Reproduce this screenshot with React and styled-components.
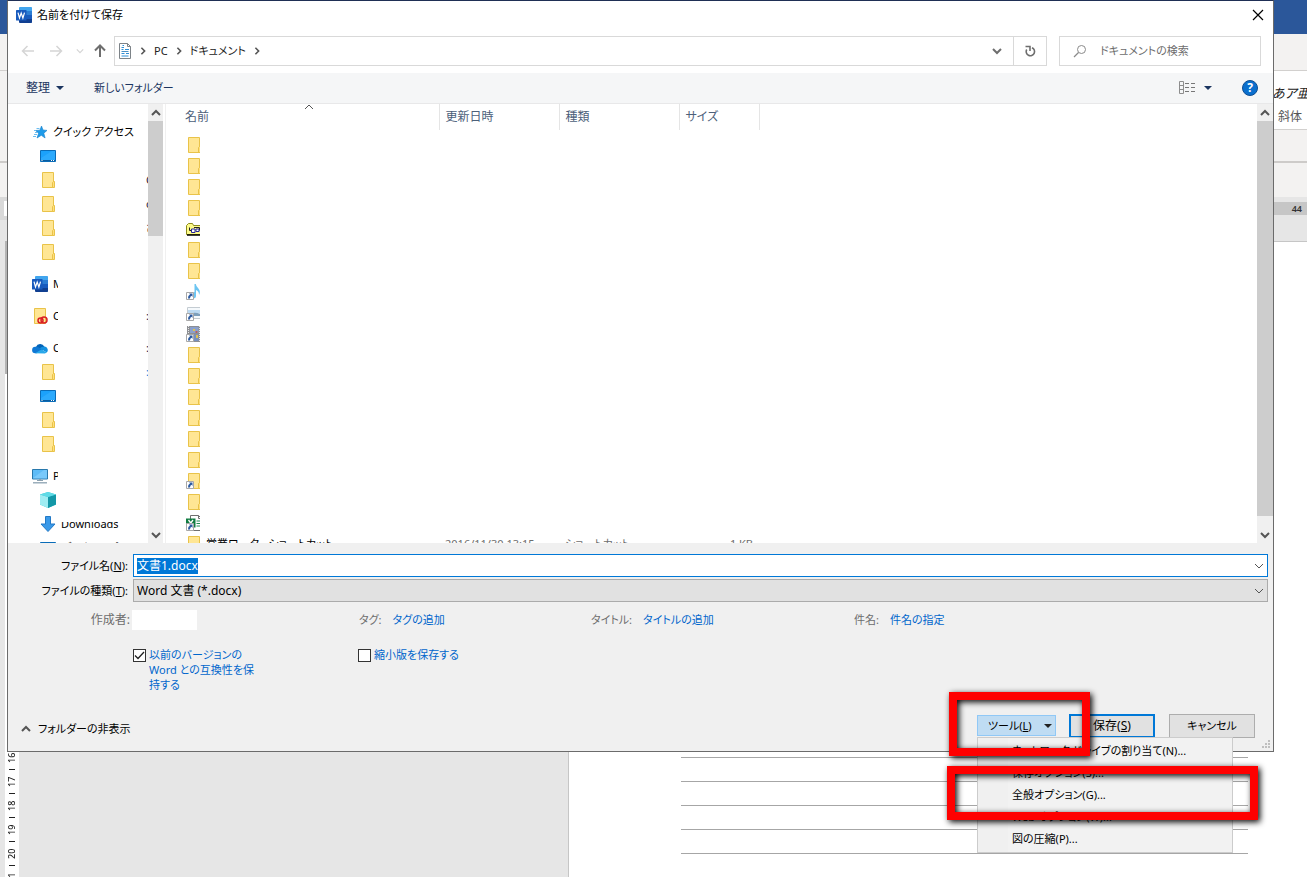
import React from 'react'
import styled, { createGlobalStyle, css } from 'styled-components'

const GlobalStyle = createGlobalStyle`
  * {
    box-sizing: border-box;
  }
  html, body, #root {
    height: 100%;
  }
  body {
    margin: 0;
    overflow: hidden;
    background: #fff;
    color: #000;
    font-family: "Noto Sans", "Noto Sans CJK JP", sans-serif;
    font-size: 12px;
    line-height: 16px;
    font-feature-settings: "palt";
  }
  button, input, select {
    font: inherit;
    font-feature-settings: inherit;
    color: inherit;
  }
`

/* ---------- icons ---------- */

const WordIcon = () => (
  <svg width="16" height="16" viewBox="0 0 16 16">
    <path d="M4 0h11.3q.7 0 .7.7V4H3V1q0-1 1-1z" fill="#41a5ee" />
    <path d="M3 4h13v4H3z" fill="#2b7cd3" />
    <path d="M3 8h13v4H3z" fill="#185abd" />
    <path d="M3 12h13v3.200q0 .8-.7.8H4q-1 0-1-1z" fill="#103f91" />
    <rect y="3" width="10.500" height="10.500" rx=".6" fill="#185abd" />
    <path d="M2 5.600 3.500 11 5.200 6 6.900 11 8.500 5.600" fill="none" stroke="#fff" strokeWidth="1.200" />
  </svg>
)

const FolderIcon = ({ shortcut, cloud }) => (
  <svg width="16" height="16" viewBox="0 0 16 16">
    <path d="M2.500.5h11v15h-11z" fill="#ffe694" stroke="#e9c349" />
    {!cloud && <path d="M12.500 15.500v-5l1-1h1v6z" fill="#ffdf7e" stroke="#e9c349" />}
    {shortcut && <Shortcut />}
    {cloud && (
      <g fill="none" stroke="#da1f26" strokeWidth="1.500">
        <circle cx="8.500" cy="12.500" r="2.500" />
        <circle cx="12" cy="12" r="3" />
      </g>
    )}
  </svg>
)

const Shortcut = () => (
  <g>
    <path d="M.5 8.500h7v7h-7z" fill="#fff" stroke="#a8a8a8" />
    <path d="M2 14.500q-.3-3 2-4L3 9.500h3.500V13l-1-1.200q-1.500.7-1.500 2.700z" fill="#2c5aa0" />
  </g>
)

const DesktopIcon = () => (
  <svg width="16" height="16" viewBox="0 0 16 16">
    <path d="M.5 2.500h15v11H.5z" fill="#1ba1fb" stroke="#0a6cb8" />
    <path d="M1 10 12 3h3v9H1z" fill="#3db3ff" opacity=".5" />
    <path d="M1 12.500h14" stroke="#0b5c9e" />
    <path d="M1.500 12.500h1M11 12.500h1M13 12.500h1" stroke="#fff" />
  </svg>
)

const StarIcon = () => (
  <svg width="16" height="16" viewBox="0 0 16 16">
    <path d="m9.500 2 1.500 4 4 .4-3.200 2.800 1.300 4.800-3.800-2.700L5 14l1.600-4.800L3.500 6.500l4.400-.3z" fill="#1d9bea" stroke="#1680ca" strokeWidth=".6" />
    <path d="M4.500 4.500h3M2 6.500h2M3 8.500h2M2 10.500h3M1 12.500h3" stroke="#6cbcf0" />
  </svg>
)

const CloudIcon = () => (
  <svg width="16" height="16" viewBox="0 0 16 16">
    <path d="M4 7a4.500 4.500 0 0 1 8.300-.5L13 9l-5 3-6-2z" fill="#0364b8" />
    <path d="M3.500 6.800q1.800-.4 3.300.6l4 2.400L5 13.300H3.200a3.200 3.200 0 0 1 .3-6.500z" fill="#0f78d4" />
    <path d="M12.300 6.600a3.500 3.500 0 0 1 2.400 6l-4.500-2.800-2.500-1.500q1.800-1.700 4.600-1.700z" fill="#1490df" />
    <path d="M3 13.300 9.500 9.400l5.300 3.200q-.8.800-2 .8z" fill="#28a8ea" />
  </svg>
)

const PcIcon = () => (
  <svg width="16" height="16" viewBox="0 0 16 16">
    <path d="M.5 1.500h15v9.500H.5z" fill="#5ebcf7" stroke="#2878ac" />
    <path d="M1 10 12 2h3v8.500H1z" fill="#92d6ff" opacity=".5" />
    <path d="M7 11.500h2M5 12.500h6" stroke="#8ba1b0" />
    <path d="M1 14.800h14" stroke="#8ba1b0" strokeWidth="1.300" />
  </svg>
)

const CubeIcon = () => (
  <svg width="16" height="16" viewBox="0 0 16 16">
    <path d="M8 0l8 2.500v10L8 16l-8-3.500v-10z" fill="#35c3d2" />
    <path d="M0 2.500 8 5v11l-8-3.500z" fill="#9fecf2" />
    <path d="M8 5l8-2.500v10L8 16z" fill="#1397a7" />
    <path d="M0 2.500 8 0l8 2.500L8 5z" fill="#5fdbe6" />
  </svg>
)

const DownloadIcon = () => (
  <svg width="16" height="16" viewBox="0 0 16 16">
    <path d="M5.500.5h5v7.500h4.500L8 15.500 1 8h4.500z" fill="#3a99e8" stroke="#2379c6" />
  </svg>
)

const BlocksFolderIcon = () => (
  <svg width="16" height="16" viewBox="0 0 16 16">
    <path d="M.5 13.500V4.500l2-2h4l1 2h7.500v9z" fill="#fdfb8a" stroke="#8d8a1c" />
    <path d="M1 14h15" stroke="#000" strokeWidth="1.500" />
    <path d="M3.500 6.500v3h3M8 6.500h5.500v3" fill="none" stroke="#222" />
    <path d="M5.500 8h3.500v3.500H5.500zM10 8h3v2.500h-3z" fill="#fff" stroke="#26269a" />
  </svg>
)

const MusicIcon = () => (
  <svg width="16" height="16" viewBox="0 0 16 16">
    <path d="M8.500 0h1.300q.3 2.500 2.600 4.500 2.600 3 .6 6.500.2-3.500-3-5v6q0 2.500-3.500 2.500V9l2-1z" fill="#6cc5f2" />
    <Shortcut />
  </svg>
)

const PictureIcon = () => (
  <svg width="16" height="16" viewBox="0 0 16 16">
    <path d="M1.500 2.500h14v11h-14z" fill="#f5f9fc" stroke="#c4ccd2" />
    <path d="M2 5h13v3H2z" fill="#bcdaf2" />
    <path d="M2 9.500q6-3 13-.5v2H2z" fill="#7d9fbb" />
    <Shortcut />
  </svg>
)

const FilmIcon = () => (
  <svg width="16" height="16" viewBox="0 0 16 16">
    <path d="M1 0h15v16H1z" fill="#8d8f93" />
    <path d="M4 1h8.500v6H4z" fill="#8aa0cc" />
    <path d="M4 8.500h8.500V15H4z" fill="#7690c0" />
    <path d="M2.500 0v16M13.500 0v16" stroke="#e8e8e8" strokeDasharray="1 1" />
    <path d="M7 3h2v2H7zM10 9h2v3h-2z" fill="#dfc04f" />
    <path d="M9.500 5h2v2h-2z" fill="#b96060" />
    <Shortcut />
  </svg>
)

const ExcelIcon = () => (
  <svg width="16" height="16" viewBox="0 0 16 16">
    <path d="M4.500.5h8l3 3v12h-11z" fill="#fff" stroke="#6f6f6f" />
    <path d="M12.500.5v3h3" fill="none" stroke="#6f6f6f" />
    <path d="M10.500 6h4M10.500 8.500h4M10.500 11h4" stroke="#1e8a52" />
    <path d="M0 3.500h9.500v9H0z" fill="#107c41" />
    <path d="m2.500 5 4.500 6M7 5l-4.500 6" stroke="#fff" strokeWidth="1.300" />
    <Shortcut />
  </svg>
)

const DocIcon = () => (
  <svg width="14" height="16" viewBox="0 0 14 16">
    <path d="M1.500.5h8l3 3v12h-11z" fill="#fff" stroke="#7d8388" />
    <path d="M9.500.5v3h3" fill="none" stroke="#7d8388" />
    <path d="M6 2.500H4.500M6 4.500H3.500M7 6.500h4M3.500 6.500h2M3.500 10.500h3M8 10.500h3M3.500 13h7" stroke="#2f8fd6" />
    <path d="M3.500 8.500h7" stroke="#4a90c4" />
  </svg>
)

const Arrow = ({ dir, color }) => {
  const turn = { left: 0, up: 90, right: 180 }[dir]
  return (
    <svg width="14" height="14" viewBox="0 0 14 14">
      <path d="M6.500 2 1.500 7l5 5M2 7h11" fill="none" stroke={color} strokeWidth={dir === 'up' ? 2 : 1.500} transform={`rotate(${turn} 7 7)`} />
    </svg>
  )
}

const Chevron = ({ dir = 'down', color = '#555', size = 10, weight = 1.500 }) => {
  const turn = { down: 0, left: 90, up: 180, right: 270 }[dir]
  return (
    <svg width={size} height={size} viewBox="0 0 10 10">
      <path d="M1 3l4 4 4-4" fill="none" stroke={color} strokeWidth={weight} transform={`rotate(${turn} 5 5)`} />
    </svg>
  )
}

const Triangle = ({ color = '#1b3560' }) => (
  <svg width="8" height="4" viewBox="0 0 8 4">
    <path d="M0 0h8L4 4z" fill={color} />
  </svg>
)

/* ---------- word window behind the dialog ---------- */

const WordWindow = styled.div`
  height: 100%;
  display: flex;
  flex-direction: column;
  overflow: hidden;
  background: #f3f2f1;
`
const WordTitle = styled.div`
  flex: none;
  height: 34px;
  background: #2b579a;
`
const WordTabs = styled.div`
  flex: none;
  height: 37px;
  border-bottom: 1px solid #d2d0ce;
`
const Ribbon = styled.div`
  flex: none;
  height: 92px;
  border-bottom: 2px solid #cdcbc9;
`
const StyleGallery = styled.div`
  height: 59px;
  margin-left: 40px;
  padding: 14px 5px 0 0;
  background: #fff;
  border-bottom: 1px solid #d2d0ce;
  display: flex;
  flex-direction: column;
  align-items: flex-end;
  gap: 8px;
  color: #555;
`
const StyleSample = styled.em`
  color: #222;
  width: 30px;
  font-size: 13px;
  white-space: nowrap;
`
const RulerBar = styled.div`
  flex: none;
  height: 44px;
  margin-top: 34px;
  display: flex;
  align-items: flex-start;
  background: #e6e6e6;
`
const TabSelector = styled.div`
  width: 40px;
  height: 23px;
  padding: 4px;
  background: #d9d9d9;

  &::before {
    content: "";
    display: block;
    height: 15px;
    background: #fff;
  }
`
const RulerScale = styled.div`
  flex: 1;
  height: 13px;
  margin-top: 5px;
  padding-right: 5px;
  background: #c6c6c6;
  color: #333;
  font-size: 9px;
  font-weight: 600;
  line-height: 13px;
  text-align: right;
`
const DocArea = styled.div`
  flex: 1;
  min-height: 0;
  display: flex;
  padding-left: 5px;
  background: #e6e6e6;
`
const VerticalRuler = styled.ol`
  width: 14px;
  margin: 0;
  padding: 11px 0;
  list-style: none;
  background: #fff;
  border-top: 133px solid #b4b4b4;
`
const RulerMark = styled.li`
  height: 24px;
  display: flex;
  flex-direction: column;
  align-items: center;
  color: #222;
  font-size: 9px;
  font-weight: 500;
  line-height: 14px;

  &::before {
    content: "";
    width: 6px;
    height: 1px;
    background: #222;
  }
  span {
    flex: 1;
    text-align: center;
    writing-mode: vertical-rl;
    transform: rotate(180deg);
  }
`
const Paper = styled.div`
  flex: 1;
  margin-left: calc(43% - 11px);
  padding: 12px 59px 0 112px;
  background: #fff;
  border: 1px solid #c6c6c6;
  border-width: 1px 0 0 1px;
`
const PaperLine = styled.div`
  height: 24px;
  border-bottom: 1px solid #a6a6a6;
`

/* ---------- dialog ---------- */

const Dialog = styled.section`
  position: absolute;
  top: 0;
  left: 7px;
  right: 33px;
  background: #fff;
  border: 1px solid #6b6b6b;
  border-top-color: #1f2f55;
  font-size: 11px;
`
const TitleBar = styled.header`
  height: 30px;
  padding: 0 9px 2px 8px;
  display: flex;
  align-items: center;
  gap: 5px;

  h1 {
    flex: 1;
    margin: 0;
    font-size: 11px;
    font-weight: 400;
  }
`
const IconButton = styled.button`
  display: flex;
  align-items: center;
  justify-content: center;
  width: ${({ $w }) => $w || 16}px;
  height: ${({ $h }) => $h || 16}px;
  padding: 0;
  border: 0;
  background: none;
`
const NavBar = styled.nav`
  height: 42px;
  padding: 5px 12px 7px;
  display: flex;
  align-items: center;
  gap: 12px;
`
const Arrows = styled.div`
  display: flex;
  align-items: center;
  gap: 8px;
  margin-right: -6px;
`
const AddressBar = styled.div`
  flex: 1;
  height: 30px;
  padding-left: 3px;
  border: 1px solid #d9d9d9;
  display: flex;
  align-items: center;
  gap: 7px;
  color: #222;
`
const AddressEnd = styled.div`
  margin-left: auto;
  height: 100%;
  display: flex;

  ${IconButton} + ${IconButton} {
    border-left: 1px solid #d9d9d9;
  }
`
const Search = styled.label`
  width: 202px;
  height: 30px;
  padding: 0 13px;
  border: 1px solid #d9d9d9;
  display: flex;
  align-items: center;
  gap: 13px;

  input {
    flex: 1;
    min-width: 0;
    padding: 0;
    border: 0;
    outline: 0;
  }
  input::placeholder {
    color: #6d6d6d;
  }
`
const Toolbar = styled.div`
  height: 31px;
  padding: 0 15px 0 18px;
  display: flex;
  align-items: center;
  gap: 30px;
  background: #f5f6f7;
  border-bottom: 1px solid #e8e8e9;
  color: #1b3560;
`
const ToolbarButton = styled.button`
  padding: 0;
  border: 0;
  background: none;
  display: flex;
  align-items: center;
  gap: 6px;
  margin-left: ${({ $end }) => ($end ? 'auto' : 0)};
  font-size: ${({ $large }) => ($large ? 12 : 11)}px;
`
const Help = styled.button`
  width: 16px;
  height: 16px;
  padding: 0;
  border: 1px solid #0d4d92;
  border-radius: 8px;
  background: #0a6fce;
  color: #fff;
  font-size: 12px;
  font-weight: 700;
  line-height: 14px;
`
const Panes = styled.div`
  height: 439px;
  display: flex;
`
const Tree = styled.ul`
  flex: none;
  width: 140px;
  margin: 0;
  padding: 16px 0 0;
  list-style: none;
  overflow: hidden;
`
const TreeRow = styled.li`
  height: 24px;
  margin-top: ${({ $group }) => ($group ? 8 : 0)}px;
  padding-left: ${({ $deep }) => ($deep ? 32 : 24)}px;
  display: flex;
  align-items: center;
  gap: 5px;
  white-space: nowrap;
`
const TreeLabel = styled.span`
  ${({ $cut }) => $cut && css`
    width: 5px;
    overflow: hidden;
  `}
  ${({ $low }) => $low && css`
    clip-path: inset(6px 0 0);
  `}
`
const TreeTail = styled.span`
  width: 2px;
  margin-left: auto;
  overflow: hidden;
  color: ${({ $link }) => ($link ? '#0078d7' : '#1a1a40')};
`
const Track = styled.div`
  flex: none;
  width: ${({ $w }) => $w}px;
  background: #f0f0f0;
  display: flex;
  flex-direction: column;
  align-items: center;
`
const Thumb = styled.div`
  width: 100%;
  height: ${({ $h }) => $h};
  margin-bottom: auto;
  background: #cdcdcd;
`
const FilePane = styled.div`
  flex: 1;
  min-width: 0;
  margin-left: 2px;
  border-left: 1px solid #f0f0f0;
  overflow: hidden;
`
const FileTable = styled.table`
  width: 100%;
  table-layout: fixed;
  border-collapse: collapse;

  th {
    height: 26px;
    padding: 0 6px;
    border-right: 1px solid #e5e5e5;
    color: #4c607a;
    font-size: 12px;
    font-weight: 400;
    text-align: left;
  }
  th:first-child {
    padding-left: 19px;
  }
  th:last-child {
    border: 0;
  }
  td {
    height: 21px;
    padding: 0 6px;
    color: #6d6d6d;
    white-space: nowrap;
  }
  tbody::before {
    content: "";
    display: block;
    height: 4px;
  }
`
const Heading = styled.div`
  height: 26px;
  display: grid;
  align-items: center;

  span, svg {
    grid-area: 1 / 1;
  }
  svg {
    place-self: start center;
    margin-top: -2px;
  }
`
const FileName = styled.div`
  height: 21px;
  padding-left: 14px;
  display: flex;
  align-items: center;
  gap: 6px;
  color: #000;
`
const FileIcon = styled.span`
  flex: none;
  width: 14px;
  height: 16px;
  overflow: hidden;
`
const RightCell = styled.td`
  text-align: right;
`
const Bottom = styled.div`
  padding: 11px 5px 0 8px;
  background: #f0f0f0;
`
const Field = styled.div`
  display: flex;
  align-items: center;
  margin-bottom: 2px;

  > label {
    width: 117px;
    padding-right: 5px;
    text-align: right;
    white-space: nowrap;
  }
`
const NameBox = styled.div`
  flex: 1;
  height: 23px;
  padding: 0 3px;
  display: flex;
  align-items: center;
  background: #fff;
  border: 1px solid #0078d7;
  font-size: 12px;

  input {
    height: 16px;
    padding: 0;
    border: 0;
    outline: 0;
    background: #0078d7;
    color: #fff;
    field-sizing: content;
  }
  button {
    margin-left: auto;
  }
`
const TypeBox = styled.div`
  flex: 1;
  height: 23px;
  padding: 0 3px;
  display: grid;
  align-items: center;
  background: #e1e1e1;
  border: 1px solid #ababab;
  font-size: 12px;

  select, svg {
    grid-area: 1 / 1;
  }
  select {
    appearance: none;
    width: 100%;
    padding: 0;
    border: 0;
    background: none;
  }
  svg {
    justify-self: end;
    pointer-events: none;
  }
`
const Properties = styled.div`
  height: 32px;
  padding-top: 6px;
  display: grid;
  grid-template-columns: 342px 232px 263px 1fr;
`
const Property = styled.div`
  display: flex;
  align-items: center;
  gap: ${({ $first }) => ($first ? 2 : 11)}px;
  padding-left: ${({ $first }) => ($first ? 0 : 1)}px;
  height: 20px;
  color: #6d6d6d;

  a {
    color: #0066cc;
    text-decoration: none;
  }
  label {
    width: 114px;
    font-size: 12px;
    text-align: right;
  }
  input {
    width: 65px;
    height: 20px;
    border: 0;
    background: #fff;
  }
`
const Options = styled.div`
  height: 66px;
  padding: 11px 0 0 117px;
  display: grid;
  grid-template-columns: 225px 1fr;
`
const Check = styled.label`
  width: 126px;
  display: flex;
  align-items: flex-start;
  gap: 3px;
  color: #0066cc;
  line-height: 15px;

  input {
    appearance: none;
    flex: none;
    width: 13px;
    height: 13px;
    margin: 2px 0 0;
    border: 1px solid #333;
    background: #fff;
  }
  input:checked {
    background: #fff url("data:image/svg+xml,%3Csvg xmlns='http://www.w3.org/2000/svg' viewBox='0 0 11 11'%3E%3Cpath d='M1 5.500l3 3 6-6.500' fill='none' stroke='%23222' stroke-width='1.300'/%3E%3C/svg%3E");
  }
`
const Footer = styled.footer`
  height: 49px;
  padding: 12px 13px 0 5px;
  display: flex;
  align-items: flex-start;
  gap: 14px;
`
const HideFolders = styled.button`
  height: 30px;
  margin-right: auto;
  padding: 0;
  border: 0;
  background: none;
  display: flex;
  align-items: center;
  gap: 7px;
`
const PushButton = styled.button`
  width: 86px;
  height: 24px;
  padding: 0;
  background: #e1e1e1;
  border: ${({ $primary }) => ($primary ? '2px solid #0078d7' : '1px solid #adadad')};
  font-size: ${({ $primary }) => ($primary ? 12 : 11)}px;
`
const Tools = styled.div`
  position: relative;
  margin-right: -1px;
  padding-top: 1px;
`
const ToolsButton = styled.button`
  width: 79px;
  height: 21px;
  padding: 0 3px 0 10px;
  display: flex;
  align-items: center;
  justify-content: space-between;
  background: #bfdcf3;
  border: 1px solid #90c8f6;
`
const Menu = styled.ul`
  position: absolute;
  z-index: 1;
  top: 23px;
  left: 0;
  width: 256px;
  margin: 0;
  padding: 2px;
  list-style: none;
  background: linear-gradient(to right, #f0f0f0 30px, #f2f2f2 30px);
  border: 1px solid #ccc;

  button {
    width: 100%;
    height: 22px;
    padding: 0 0 0 32px;
    border: 0;
    background: none;
    text-align: left;
  }
`
const Marker = styled.div`
  position: absolute;
  z-index: 2;
  top: ${({ $top }) => $top}px;
  left: ${({ $left }) => $left}px;
  width: ${({ $w }) => $w}px;
  height: ${({ $h }) => $h}px;
  border: 8px solid #f00;
  filter: drop-shadow(2px 2px 3px #000);
  pointer-events: none;
`
const Grip = styled.svg`
  position: absolute;
  right: 2px;
  bottom: 2px;
`

const treeItems = [
  { icon: <StarIcon />, text: 'クイック アクセス' },
  { icon: <DesktopIcon />, deep: true },
  { icon: <FolderIcon />, deep: true, tail: 'C' },
  { icon: <FolderIcon />, deep: true, tail: 'c' },
  { icon: <FolderIcon />, deep: true, tail: 'さ' },
  { icon: <FolderIcon />, deep: true },
  { icon: <WordIcon />, text: 'M', cut: true, group: true },
  { icon: <FolderIcon cloud />, text: 'C', cut: true, group: true, tail: ':' },
  { icon: <CloudIcon />, text: 'O', cut: true, group: true, tail: ':' },
  { icon: <FolderIcon />, deep: true, tail: ':', link: true },
  { icon: <DesktopIcon />, deep: true },
  { icon: <FolderIcon />, deep: true },
  { icon: <FolderIcon />, deep: true },
  { icon: <PcIcon />, text: 'P', cut: true, group: true },
  { icon: <CubeIcon />, deep: true },
  { icon: <DownloadIcon />, text: 'Downloads', deep: true, low: true },
  { icon: <DesktopIcon />, text: 'デスクトップ', deep: true },
]

const folder = <FolderIcon />
const files = [
  folder, folder, folder, folder,
  <BlocksFolderIcon />,
  folder, folder,
  <MusicIcon />,
  <PictureIcon />,
  <FilmIcon />,
  folder, folder, folder, folder, folder, folder,
  <FolderIcon shortcut />,
  folder,
  <ExcelIcon />,
]

const menuItems = [
  'ネットワーク ドライブの割り当て(N)...',
  '保存オプション(S)...',
  '全般オプション(G)...',
  'Web オプション(W)...',
  '図の圧縮(P)...',
]

const ScrollBar = ({ w, thumb }) => (
  <Track $w={w}>
    <IconButton $w={w} $h={17} aria-label="上へスクロール"><Chevron dir="up" weight={2} /></IconButton>
    <Thumb $h={thumb} />
    <IconButton $w={w} $h={17} aria-label="下へスクロール"><Chevron weight={2} /></IconButton>
  </Track>
)

const Background = () => (
  <WordWindow>
    <WordTitle />
    <WordTabs />
    <Ribbon>
      <StyleGallery>
        <StyleSample>あア亜</StyleSample>
        <span>斜体</span>
      </StyleGallery>
    </Ribbon>
    <RulerBar>
      <TabSelector />
      <RulerScale>44</RulerScale>
    </RulerBar>
    <DocArea>
      <VerticalRuler>
        {Array.from({ length: 21 }, (_, i) => (
          <RulerMark key={i}><span>{i + 1}</span></RulerMark>
        ))}
      </VerticalRuler>
      <Paper>
        {Array.from({ length: 26 }, (_, i) => <PaperLine key={i} />)}
      </Paper>
    </DocArea>
  </WordWindow>
)

const App = () => {
  return (
    <>
      <GlobalStyle />
      <Background />
      <Dialog role="dialog" aria-labelledby="title">
        <TitleBar>
          <WordIcon />
          <h1 id="title">名前を付けて保存</h1>
          <IconButton $w={12} aria-label="閉じる">
            <svg width="12" height="12" viewBox="0 0 12 12">
              <path d="m1 1 10 10M11 1 1 11" stroke="#000" strokeWidth="1.200" />
            </svg>
          </IconButton>
        </TitleBar>

        <NavBar>
          <Arrows>
            <IconButton aria-label="戻る"><Arrow dir="left" color="#d5d5d5" /></IconButton>
            <IconButton $w={24} aria-label="進む"><Arrow dir="right" color="#d5d5d5" /></IconButton>
            <IconButton $w={8} aria-label="履歴"><Chevron color="#d5d5d5" size={8} /></IconButton>
            <IconButton aria-label="上へ"><Arrow dir="up" color="#6e6e6e" /></IconButton>
          </Arrows>
          <AddressBar>
            <DocIcon />
            <Chevron dir="right" size={8} weight={2} />
            <span>PC</span>
            <Chevron dir="right" size={8} weight={2} />
            <span>ドキュメント</span>
            <Chevron dir="right" size={8} weight={2} />
            <AddressEnd>
              <IconButton $w={32} $h={28} aria-label="以前の場所"><Chevron color="#6e6e6e" weight={2} /></IconButton>
              <IconButton $w={33} $h={28} aria-label="更新">
                <svg width="12" height="12" viewBox="0 0 12 12">
                  <path d="M8 2.700A4.200 4.200 0 1 1 2.700 4.500M1.500 1.500H6V6" fill="none" stroke="#6e6e6e" strokeWidth="1.600" />
                </svg>
              </IconButton>
            </AddressEnd>
          </AddressBar>
          <Search>
            <svg width="14" height="14" viewBox="0 0 14 14">
              <path d="M5.500 8.500 1 13" stroke="#8a8a8a" strokeWidth="1.200" />
              <circle cx="8.500" cy="5.500" r="4" fill="none" stroke="#8a8a8a" />
            </svg>
            <input aria-label="検索" placeholder="ドキュメントの検索" />
          </Search>
        </NavBar>

        <Toolbar>
          <ToolbarButton $large>整理 <Triangle /></ToolbarButton>
          <ToolbarButton>新しいフォルダー</ToolbarButton>
          <ToolbarButton $end aria-label="表示方法">
            <svg width="20" height="14" viewBox="0 0 20 14">
              <path d="M1.500.5h4v12h-4zM1.500 4.500h4M1.500 8.500h4" fill="none" stroke="#8d8d8d" />
              <path d="M7 2.500h4M7 6.500h4M7 10.500h4M13 2.500h4M13 6.500h4M13 10.500h4" stroke="#777" />
            </svg>
            <Triangle />
          </ToolbarButton>
          <Help aria-label="ヘルプ">?</Help>
        </Toolbar>

        <Panes>
          <Tree>
            {treeItems.map((item, i) => (
              <TreeRow key={i} $deep={item.deep} $group={item.group}>
                {item.icon}
                {item.text && <TreeLabel $cut={item.cut} $low={item.low}>{item.text}</TreeLabel>}
                {item.tail && <TreeTail $link={item.link}>{item.tail}</TreeTail>}
              </TreeRow>
            ))}
          </Tree>
          <ScrollBar w={15} thumb="115px" />
          <FilePane>
            <FileTable>
              <colgroup>
                <col style={{ width: 273 }} />
                <col style={{ width: 120 }} />
                <col style={{ width: 120 }} />
                <col style={{ width: 80 }} />
                <col />
              </colgroup>
              <thead>
                <tr>
                  <th><Heading><span>名前</span><Chevron dir="up" weight={1} /></Heading></th>
                  <th>更新日時</th>
                  <th>種類</th>
                  <th>サイズ</th>
                  <th />
                </tr>
              </thead>
              <tbody>
                {files.map((icon, i) => (
                  <tr key={i}>
                    <td colSpan={5}><FileName><FileIcon>{icon}</FileIcon></FileName></td>
                  </tr>
                ))}
                <tr>
                  <td><FileName><FileIcon>{folder}</FileIcon>営業ロータ - ショートカット</FileName></td>
                  <td>2016/11/30 13:15</td>
                  <td>ショートカット</td>
                  <RightCell>1 KB</RightCell>
                  <td />
                </tr>
              </tbody>
            </FileTable>
          </FilePane>
          <ScrollBar w={16} thumb="395px" />
        </Panes>

        <Bottom>
          <Field>
            <label htmlFor="filename">ファイル名(<u>N</u>):</label>
            <NameBox>
              <input id="filename" defaultValue="文書1.docx" />
              <IconButton $w={10} aria-label="候補"><Chevron weight={1} /></IconButton>
            </NameBox>
          </Field>
          <Field>
            <label htmlFor="filetype">ファイルの種類(<u>T</u>):</label>
            <TypeBox>
              <select id="filetype">
                <option>Word 文書 (*.docx)</option>
              </select>
              <Chevron weight={1} />
            </TypeBox>
          </Field>
          <Properties>
            <Property $first>
              <label htmlFor="author">作成者:</label>
              <input id="author" />
            </Property>
            <Property>タグ: <a href="#tag">タグの追加</a></Property>
            <Property>タイトル: <a href="#title">タイトルの追加</a></Property>
            <Property>件名: <a href="#subject">件名の指定</a></Property>
          </Properties>
          <Options>
            <Check>
              <input type="checkbox" defaultChecked />
              <span>以前のバージョンの<br />Word との互換性を保持する</span>
            </Check>
            <Check>
              <input type="checkbox" />
              <span>縮小版を保存する</span>
            </Check>
          </Options>
          <Footer>
            <HideFolders><Chevron dir="up" weight={2} />フォルダーの非表示</HideFolders>
            <Tools>
              <ToolsButton>
                <span>ツール(<u>L</u>)</span>
                <Triangle color="#222" />
              </ToolsButton>
              <Menu>
                {menuItems.map((text) => (
                  <li key={text}><button>{text}</button></li>
                ))}
              </Menu>
              <Marker $top={-22} $left={-28} $w={141} $h={64} />
              <Marker $top={52} $left={-30} $w={311} $h={54} />
            </Tools>
            <PushButton $primary>保存(<u>S</u>)</PushButton>
            <PushButton>キャンセル</PushButton>
          </Footer>
        </Bottom>
        <Grip width="9" height="9" viewBox="0 0 9 9" fill="#bfbfbf">
          <path d="M6 0h2v2H6zM3 3h2v2H3zM6 3h2v2H6zM0 6h2v2H0zM3 6h2v2H3zM6 6h2v2H6z" />
        </Grip>
      </Dialog>
    </>
  )
}

export default App
